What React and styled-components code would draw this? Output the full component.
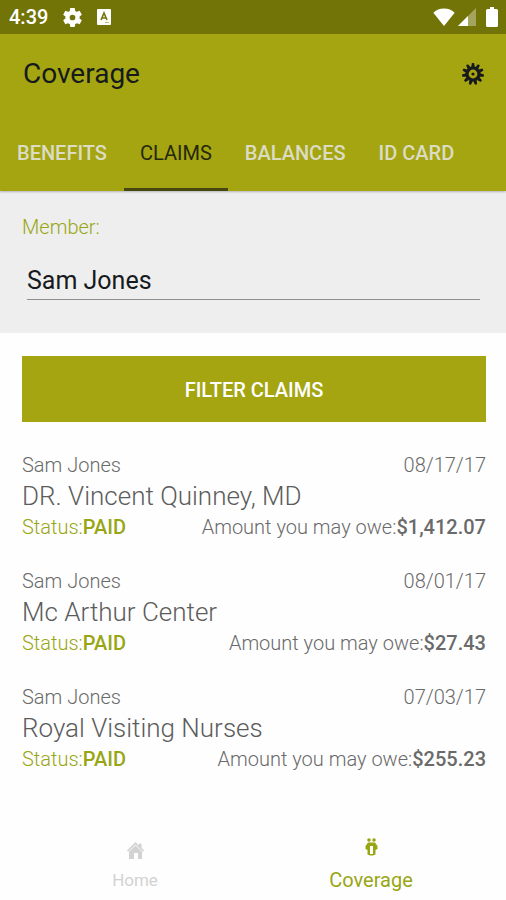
import React, { useState } from "react";
import styled, { createGlobalStyle, css, ThemeProvider } from "styled-components";

const theme = {
  primary: "#a4a511",
  primaryDark: "#737408",
  accent: "#98a614",
  panel: "#eeeeee",
  background: "#fefefe",
  text1: "#161a1c",
  text2: "#5c5c5c",
  text3: "#6a6a6a",
  disabled: "#d2d2d2",
  white: "#ffffff",
};

const GlobalStyle = createGlobalStyle`
  * {
    box-sizing: border-box;
  }
  html, body, #root {
    height: 100%;
  }
  body {
    margin: 0;
    background: #fefefe;
    font-family: Roboto, "Liberation Sans", sans-serif;
  }
  button, input {
    font-family: inherit;
    border: none;
    border-radius: 0;
    padding: 0;
    background: none;
  }
`;

const Screen = styled.div`
  display: flex;
  flex-direction: column;
  min-height: 100%;
  background: ${({ theme }) => theme.background};
`;

const StatusBar = styled.div`
  display: flex;
  align-items: center;
  justify-content: space-between;
  height: 34px;
  padding: 0 8px 0 9px;
  background: ${({ theme }) => theme.primaryDark};
  color: ${({ theme }) => theme.white};
`;

const StatusGroup = styled.div`
  display: flex;
  align-items: center;
  gap: ${({ $gap }) => $gap}px;
`;

const Clock = styled.span`
  font-size: 20px;
  font-weight: 500;
  line-height: 24px;
`;

const Header = styled.header`
  position: relative;
  background: ${({ theme }) => theme.primary};
  box-shadow: 0 1px 2px rgba(0, 0, 0, 0.25);
`;

const Toolbar = styled.div`
  display: flex;
  align-items: center;
  justify-content: space-between;
  height: 81px;
  padding: 0 22px 2px 23px;
`;

const Title = styled.h1`
  margin: 0;
  font-size: 28px;
  font-weight: 400;
  color: ${({ theme }) => theme.text1};
`;

const IconButton = styled.button`
  display: flex;
  color: ${({ theme }) => theme.text1};
  cursor: pointer;
`;

const Tabs = styled.nav`
  display: flex;
  gap: 1px;
  padding-left: 1px;
`;

const Tab = styled.button`
  height: 76px;
  padding: 3px 16px 0;
  border-bottom: 3px solid transparent;
  font-size: 20px;
  font-weight: 500;
  color: #dcdcc4;
  cursor: pointer;
  ${({ $active }) =>
    $active &&
    css`
      color: #26280a;
      font-weight: 400;
      border-bottom-color: #47480f;
    `}
`;

const MemberPanel = styled.section`
  display: flex;
  flex-direction: column;
  padding: 24px 22px 33px;
  background: ${({ theme }) => theme.panel};
`;

const MemberLabel = styled.label`
  font-size: 20px;
  line-height: 24px;
  font-weight: 300;
  color: ${({ theme }) => theme.accent};
`;

const MemberInput = styled.input`
  height: 45px;
  margin: 16px 4px 0 5px;
  padding-top: 6px;
  border-bottom: 1px solid #8c9090;
  font-size: 25px;
  font-weight: 400;
  color: ${({ theme }) => theme.text1};
  outline: none;
`;

const Content = styled.main`
  flex: 1;
  padding: 23px 20px 0 22px;
`;

const FilterButton = styled.button`
  width: 100%;
  height: 66px;
  padding-top: 2px;
  background: ${({ theme }) => theme.primary};
  color: ${({ theme }) => theme.white};
  font-size: 20px;
  font-weight: 500;
  cursor: pointer;
`;

const ClaimList = styled.ul`
  display: flex;
  flex-direction: column;
  gap: 27px;
  margin: 0;
  padding: 30px 0 0;
  list-style: none;
`;

const ClaimRow = styled.div`
  display: flex;
  justify-content: space-between;
  font-size: 20px;
  line-height: 27px;
  font-weight: 300;
  color: ${({ theme }) => theme.text3};
`;

const Provider = styled.h2`
  margin: 0;
  font-size: 26px;
  line-height: 35px;
  font-weight: 300;
  color: ${({ theme }) => theme.text2};
`;

const Status = styled.span`
  color: ${({ theme }) => theme.accent};
`;

const Strong = styled.strong`
  font-weight: 500;
`;

const BottomNav = styled.nav`
  display: flex;
  justify-content: center;
  height: 78px;
`;

const NavItem = styled.a`
  display: flex;
  flex-direction: column;
  align-items: center;
  justify-content: flex-end;
  gap: ${({ $active }) => ($active ? 12 : 9)}px;
  width: 236px;
  padding-bottom: 8px;
  font-size: ${({ $active }) => ($active ? 20 : 17)}px;
  line-height: 24px;
  text-decoration: none;
  color: ${({ $active, theme }) => ($active ? theme.accent : theme.disabled)};
`;

const SettingsIcon = () => (
  <svg width="19" height="19" viewBox="2 2 20 20" fill="currentColor">
    <path d="M19.43 12.98c.04-.32.07-.64.07-.98s-.03-.66-.07-.98l2.11-1.65c.19-.15.24-.42.12-.64l-2-3.46c-.12-.22-.39-.3-.61-.22l-2.49 1c-.52-.4-1.08-.73-1.69-.98l-.38-2.65A.49.49 0 0 0 14 2h-4c-.25 0-.46.18-.49.42l-.38 2.65c-.61.25-1.17.59-1.69.98l-2.49-1c-.23-.09-.49 0-.61.22l-2 3.46c-.13.22-.07.49.12.64l2.11 1.65c-.04.32-.07.65-.07.98s.03.66.07.98l-2.11 1.65c-.19.15-.24.42-.12.64l2 3.46c.12.22.39.3.61.22l2.49-1c.52.4 1.08.73 1.69.98l.38 2.65c.03.24.24.42.49.42h4c.25 0 .46-.18.49-.42l.38-2.65c.61-.25 1.17-.59 1.69-.98l2.49 1c.23.09.49 0 .61-.22l2-3.46c.12-.22.07-.49-.12-.64zM12 15a3 3 0 1 1 0-6 3 3 0 0 1 0 6z" />
  </svg>
);

const KeyboardIcon = () => (
  <svg width="14" height="16" viewBox="0 0 14 16">
    <rect width="14" height="16" rx="1" fill="#fff" />
    <path d="M4 11 7 4l3 7M5 9h4" fill="none" stroke="#737408" strokeWidth="1.6" />
    <path d="M8 13.5h4" stroke="#b9ba84" />
  </svg>
);

const WifiIcon = () => (
  <svg width="22" height="18" viewBox="0 0 22 18" fill="currentColor">
    <path d="M11 18 .3 4.8C3 2 6.7.5 11 .5S19 2 21.7 4.8z" />
  </svg>
);

const SignalIcon = () => (
  <svg width="18" height="18" viewBox="0 0 18 18" fill="currentColor">
    <path d="M18 0v18H0z" opacity="0.35" />
    <path d="M10 8v10H0z" />
  </svg>
);

const BatteryIcon = () => (
  <svg width="12" height="20" viewBox="0 0 12 20" fill="currentColor">
    <path d="M4 0h4v2h2.5A1.5 1.5 0 0 1 12 3.5v15a1.5 1.5 0 0 1-1.5 1.5h-9A1.5 1.5 0 0 1 0 18.5v-15A1.5 1.5 0 0 1 1.5 2H4z" />
  </svg>
);

const TEETH = Array.from({ length: 11 }, (_, i) => (i * 360) / 11);

const CogIcon = () => (
  <svg width="22" height="22" viewBox="-11 -11 22 22" fill="currentColor">
    {TEETH.map((angle) => (
      <path key={angle} d="M-1.8-7-1.1-11H1.1L1.8-7z" transform={`rotate(${angle})`} />
    ))}
    <circle r="6" fill="none" stroke="currentColor" strokeWidth="3.2" />
    <circle r="1.6" />
  </svg>
);

const HomeIcon = () => (
  <svg width="17" height="17" viewBox="0 0 17 17" fill="currentColor">
    <path d="M0 8.5 8.5 0 12 3.5V1.5h2.5V6L17 8.5 15.8 9.7 8.5 2.6 1.2 9.7z" />
    <path d="M2 9.8 8.5 3.6 15 9.8V17h-4v-6H7v6H2z" />
  </svg>
);

const CoverageIcon = () => (
  <svg width="13" height="18" viewBox="0 0 13 18" fill="currentColor">
    <circle cx="4" cy="2" r="1.8" />
    <circle cx="9" cy="2" r="1.8" />
    <path
      d="M3 4.500H10L12.500 8v3L10.500 12v4.500L8 17.500H5L2.500 16.500V12L.5 11V8z M5 8v8h3V8z"
      fillRule="evenodd"
    />
  </svg>
);

const TABS = ["BENEFITS", "CLAIMS", "BALANCES", "ID CARD"];

const CLAIMS = [
  {
    member: "Sam Jones",
    date: "08/17/17",
    provider: "DR. Vincent Quinney, MD",
    status: "PAID",
    owed: "$1,412.07",
  },
  {
    member: "Sam Jones",
    date: "08/01/17",
    provider: "Mc Arthur Center",
    status: "PAID",
    owed: "$27.43",
  },
  {
    member: "Sam Jones",
    date: "07/03/17",
    provider: "Royal Visiting Nurses",
    status: "PAID",
    owed: "$255.23",
  },
];

function Claim({ claim }) {
  return (
    <li>
      <ClaimRow>
        <span>{claim.member}</span>
        <span>{claim.date}</span>
      </ClaimRow>
      <Provider>{claim.provider}</Provider>
      <ClaimRow>
        <Status>
          Status:<Strong>{claim.status}</Strong>
        </Status>
        <span>
          Amount you may owe:<Strong>{claim.owed}</Strong>
        </span>
      </ClaimRow>
    </li>
  );
}

export default function App() {
  const [tab, setTab] = useState("CLAIMS");
  const [member, setMember] = useState("Sam Jones");

  return (
    <ThemeProvider theme={theme}>
      <GlobalStyle />
      <Screen>
        <StatusBar>
          <StatusGroup $gap={15}>
            <Clock>4:39</Clock>
            <SettingsIcon />
            <KeyboardIcon />
          </StatusGroup>
          <StatusGroup $gap={10}>
            <StatusGroup $gap={3}>
              <WifiIcon />
              <SignalIcon />
            </StatusGroup>
            <BatteryIcon />
          </StatusGroup>
        </StatusBar>
        <Header>
          <Toolbar>
            <Title>Coverage</Title>
            <IconButton aria-label="Settings">
              <CogIcon />
            </IconButton>
          </Toolbar>
          <Tabs>
            {TABS.map((name) => (
              <Tab key={name} $active={name === tab} onClick={() => setTab(name)}>
                {name}
              </Tab>
            ))}
          </Tabs>
        </Header>
        <MemberPanel>
          <MemberLabel htmlFor="member">Member:</MemberLabel>
          <MemberInput
            id="member"
            value={member}
            onChange={(e) => setMember(e.target.value)}
          />
        </MemberPanel>
        <Content>
          <FilterButton>FILTER CLAIMS</FilterButton>
          <ClaimList>
            {CLAIMS.map((claim) => (
              <Claim key={claim.date} claim={claim} />
            ))}
          </ClaimList>
        </Content>
        <BottomNav>
          <NavItem href="#home">
            <HomeIcon />
            Home
          </NavItem>
          <NavItem href="#coverage" $active>
            <CoverageIcon />
            Coverage
          </NavItem>
        </BottomNav>
      </Screen>
    </ThemeProvider>
  );
}
